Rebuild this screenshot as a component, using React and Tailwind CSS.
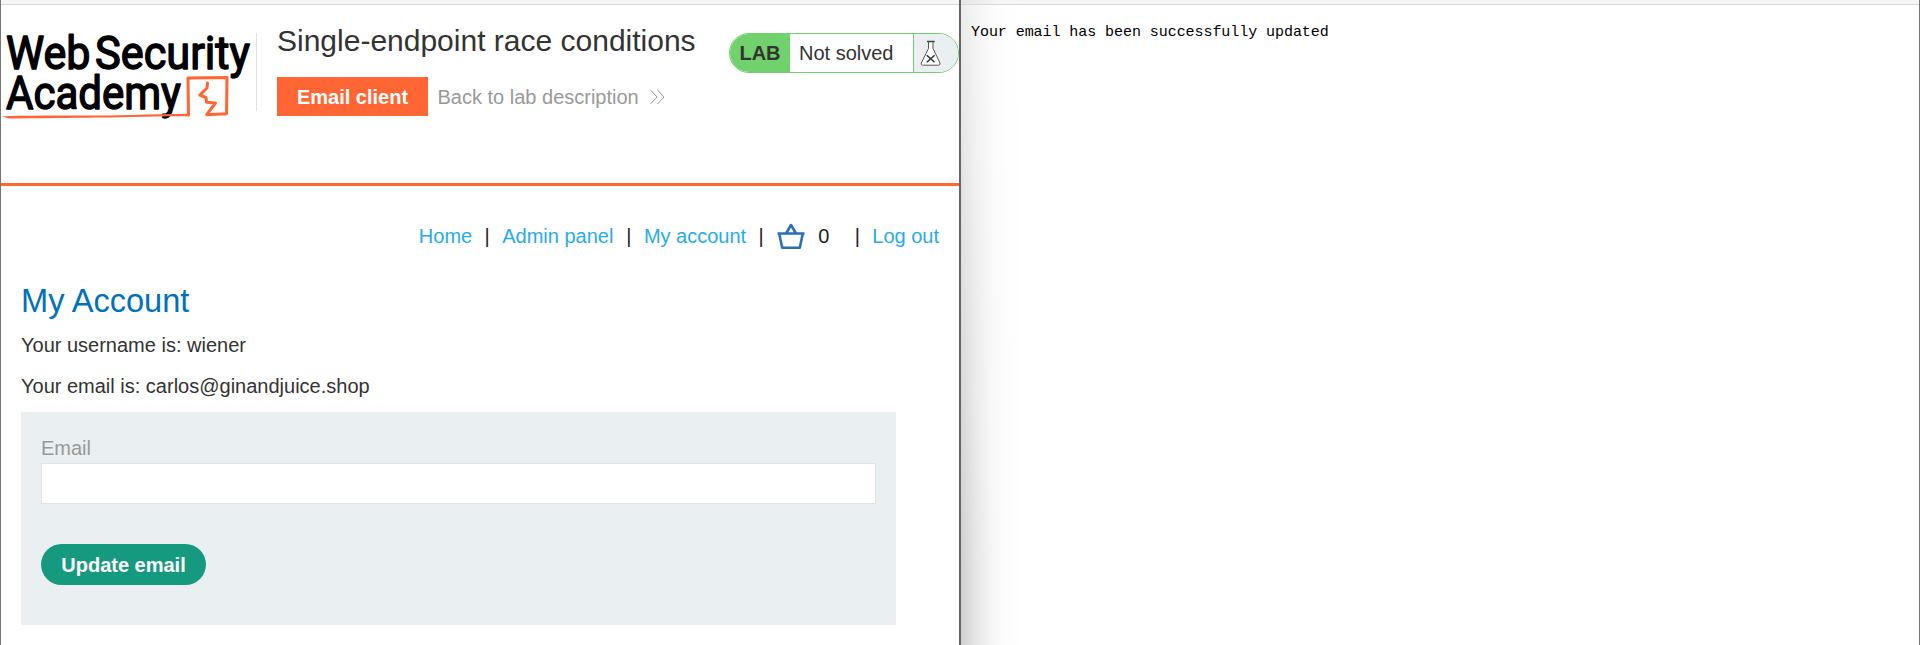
function Logo() {
  return (
    <svg className="block h-[94px] w-[255px] shrink-0 overflow-visible" viewBox="0 0 255 94" fill="none">
      <g fill="#000" stroke="#000" strokeWidth="1.5" strokeLinejoin="round" fontFamily="Roboto, sans-serif" fontWeight="400" fontSize="47">
        <text x="5" y="41.500" textLength="84.500" lengthAdjust="spacingAndGlyphs">Web</text>
        <text x="94" y="41.500" textLength="155" lengthAdjust="spacingAndGlyphs">Security</text>
        <text x="5" y="82.300" textLength="175" lengthAdjust="spacingAndGlyphs">Academy</text>
      </g>
      <g stroke="#ff6633" strokeWidth="3" strokeLinejoin="round" strokeLinecap="round">
        <path d="M187.500 88 L187 51 L226 50.500 L225.500 86.700 L205.700 87.700 L214.500 76 L205.500 75.200 L205 70.500 L198.800 68 L206 61 L206.500 56" />
      </g>
      <path d="M1 89.300 C50 87.800 90 89.300 130 88 C150 87.200 170 87 188 86.800 V89.300 C150 89 120 90.500 85 90.700 C55 90.800 25 91.500 8 91.400 Z" fill="#ff6633" />
    </svg>
  );
}

function Flask() {
  return (
    <svg className="h-[26px] w-[22px]" viewBox="0 0 22 26" fill="none">
      <path d="M8.500 1.500 V8.500 L1.300 23 Q1 25 2.500 25.200 H18.500 Q20.500 25 20 23 L13 8.500 V1.500" fill="#fff" stroke="#555" strokeWidth="1" />
      <path d="M7 1.500 H14.700" stroke="#444" strokeWidth="1.500" />
      <path d="M6.800 15.300 L14.600 22.300 M14.600 15.300 L6.800 22.300" stroke="#333" strokeWidth="1.500" />
    </svg>
  );
}

function Basket() {
  return (
    <svg className="ml-[12px] h-[28px] w-[28px]" viewBox="0 0 28 28" fill="none" stroke="#2a70b8" strokeWidth="2.6" strokeLinejoin="round">
      <path d="M0.500 11.500 H27.500 M9 11.500 L14 3 L19 11.500" />
      <path d="M2.200 11.500 L5.200 25.800 H22.800 L25.800 11.500" />
    </svg>
  );
}

export default function App() {
  return (
    <div className="flex h-[645px] w-[1920px] overflow-hidden bg-white font-['Liberation_Sans',Arial,sans-serif] text-[20px] leading-[30px] text-[#333332]">
      <main className="h-full w-[961px] shrink-0 border-r-2 border-l border-r-[#666] border-l-[#777]">
        <div className="h-[5px] border-b border-[#d9d9dc] bg-[#f6f6f9]" />
        <header className="flex h-[181px] border-b-[3px] border-[#ff6633] pt-[22px]">
          <Logo />
          <div className="mt-[6px] h-[78px] w-px bg-[#e3e3e3]" />
          <div className="ml-[20px] w-[440px] shrink-0">
            <h1 className="-mt-1 h-[36px] text-[30px] leading-[36px] whitespace-nowrap">Single-endpoint race conditions</h1>
            <div className="mt-[18px] flex items-center">
              <button className="h-[39px] w-[151px] bg-[#ff6633] font-bold text-white">Email client</button>
              <a className="ml-[9.5px] flex items-center text-[#999]">
                Back to lab description
                <svg className="ml-[11px] h-[16px] w-[15px]" viewBox="0 0 15 16" fill="none" stroke="#999" strokeWidth="1">
                  <path d="M0.500 1 L7 8 L0.500 15 M7.500 1 L14 8 L7.500 15" />
                </svg>
              </a>
            </div>
          </div>
          <div className="mt-[6px] ml-[12px] flex h-[40px] w-[230px] shrink-0 overflow-hidden rounded-full border border-[#70d16d]">
            <span className="flex w-[60px] items-center justify-center bg-[#70d16d] font-bold">LAB</span>
            <span className="flex w-[124px] items-center border-r border-[#70d16d] pl-[9px]">Not solved</span>
            <span className="flex flex-1 items-center bg-[#eaeff2] pl-[6px]"><Flask /></span>
          </div>
        </header>
        <nav className="mt-[35px] flex h-[30px] items-center justify-end pr-[20px] text-[#29abe8]">
          <a>Home</a><span className="mx-[11px] w-[8px] text-center text-[#222]">|</span>
          <a>Admin panel</a><span className="mr-[11px] ml-[11.5px] w-[8px] text-center text-[#222]">|</span>
          <a>My account</a><span className="ml-[11px] w-[8px] text-center text-[#222]">|</span>
          <Basket />
          <span className="ml-[13px] text-[#222]">0</span>
          <span className="mr-[11px] ml-[24px] w-[8px] text-center text-[#222]">|</span>
          <a>Log out</a>
        </nav>
        <section className="px-[20px] pt-[30px]">
          <h2 className="h-[40px] text-[32.6px] leading-[40px] text-[#0071bc]">My Account</h2>
          <p className="mt-[9px]">Your username is: wiener</p>
          <p className="mt-[11px]">Your email is: carlos@ginandjuice.shop</p>
          <form className="mt-[11px] h-[213px] w-[875px] bg-[#eaeff2] px-[20px] pt-[21px]">
            <label className="block text-[#999]">Email</label>
            <div className="h-[41px] border border-[#e3e3e3] bg-white" />
            <button type="button" className="mt-[40px] block h-[41px] w-[165px] rounded-full bg-[#159a80] font-bold text-white">Update email</button>
          </form>
        </section>
      </main>
      <aside className="flex min-w-0 flex-1 flex-col border-r border-[#777]">
        <div className="h-[5px] shrink-0 border-b border-[#d9d9dc] bg-[linear-gradient(to_right,#e6e6e8,#f6f6f9_40px)]" />
        <div className="flex-1 bg-[linear-gradient(to_bottom,rgba(255,255,255,0.6),rgba(255,255,255,0)_90%),linear-gradient(to_right,#cfcfcf,#e6e6e6_15px,#f7f7f7_32px,#fdfdfd_48px,#fff_62px)] pt-[18px] pl-[10px]">
          <pre className="font-['Liberation_Mono',monospace] text-[15px] leading-[20px] tracking-[-0.06px] text-black">Your email has been successfully updated</pre>
        </div>
      </aside>
    </div>
  );
}
